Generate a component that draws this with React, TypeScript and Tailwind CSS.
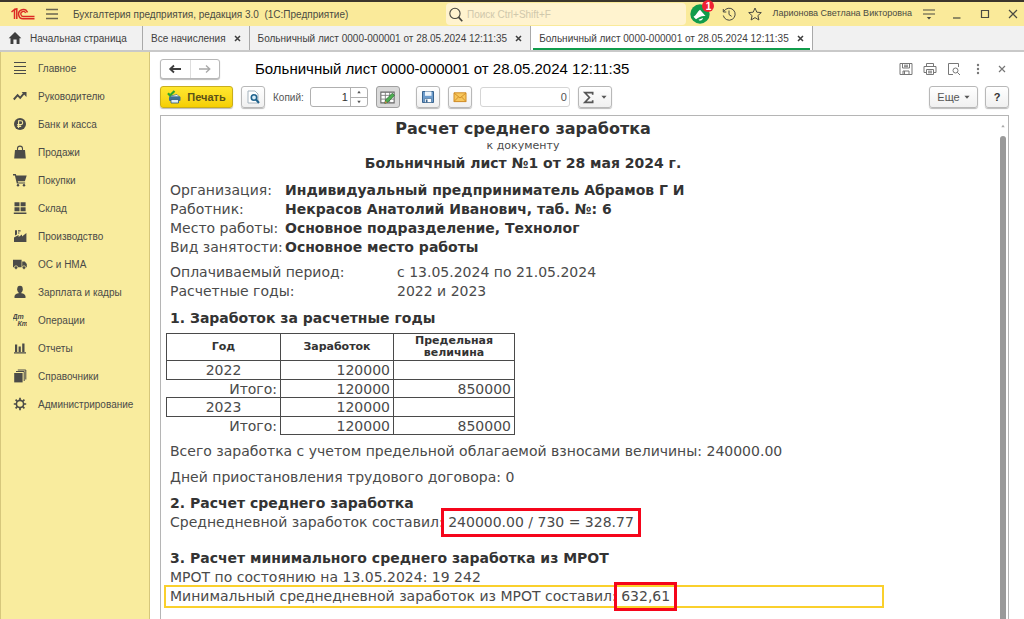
import type { ReactNode } from "react";
import clsx from "clsx";

type IconProps = { children: ReactNode; size?: number; className?: string };

function Icon({ children, size = 14, className }: IconProps) {
  return (
    <svg
      width={size}
      height={size}
      viewBox="0 0 14 14"
      fill="currentColor"
      className={clsx("shrink-0", className)}
      aria-hidden="true"
    >
      {children}
    </svg>
  );
}

const line = { fill: "none", stroke: "currentColor" };

const sections: { label: string; icon: ReactNode }[] = [
  { label: "Главное", icon: <path d="M1 1.5h12M1 5.5h12M1 9.500h12M1 12.5h12" {...line} strokeWidth={1} /> },
  {
    label: "Руководителю",
    icon: (
      <>
        <path d="M.8 10.5 4.6 6.2l2.6 2.6 4-4.6" {...line} strokeWidth={1.9} />
        <path d="M8.6 3h4.9v4.9z" />
      </>
    ),
  },
  {
    label: "Банк и касса",
    icon: (
      <>
        <circle cx="7" cy="7" r="6" />
        <path d="M5.6 11V3.8h2.2a1.9 1.9 0 0 1 0 3.8H4.2M4.2 9.4h4" fill="none" stroke="#f9ec9e" strokeWidth={1.1} />
      </>
    ),
  },
  {
    label: "Продажи",
    icon: (
      <>
        <path d="M2 5h10l.8 8.5H1.2z" />
        <path d="M4.5 7V3.6a2.5 2.5 0 0 1 5 0V7" {...line} strokeWidth={1.1} />
      </>
    ),
  },
  {
    label: "Покупки",
    icon: (
      <>
        <path d="M0 1h2.8l.5 1.6h10.4l-1.8 5.6H4.8l.3 1.2h7v1.2H3.8L1.9 2.4H0z" />
        <circle cx="5" cy="12.3" r="1.2" />
        <circle cx="11" cy="12.3" r="1.2" />
      </>
    ),
  },
  {
    label: "Склад",
    icon: <path d="M1.5 1.2h5v4h-5zM7.6 1.2h5v4h-5zM1.5 6.3h5v4h-5zM7.6 6.3h5v4h-5zM.8 11.6h12.6v1.4H.8z" />,
  },
  {
    label: "Производство",
    icon: <path d="M1 13V8.400l4.600-2.400V8l3.400-2.400v1.800l4.400-3.400V13zM2 1.200h2V5.400l-2 1.200zM5 1.200h2.600v1.400H5zM5 3.400h1.400v1.200H5z" />,
  },
  {
    label: "ОС и НМА",
    icon: (
      <>
        <path d="M0 2.8h8.6v7.4H0zM9.2 4.4h2.6L13.8 7v3.2H9.2z" />
        <circle cx="3" cy="10.6" r="1.8" stroke="#f9ec9e" strokeWidth={0.7} />
        <circle cx="11" cy="10.6" r="1.8" stroke="#f9ec9e" strokeWidth={0.7} />
      </>
    ),
  },
  {
    label: "Зарплата и кадры",
    icon: (
      <>
        <ellipse cx="7" cy="4.200" rx="2.800" ry="3.400" />
        <path d="M5.700 6.500h2.600v1.800c2.500.3 4 1.400 4.200 3V13h-11v-1.700c.2-1.600 1.700-2.700 4.200-3z" />
      </>
    ),
  },
  {
    label: "Операции",
    icon: (
      <>
        <text x="-.5" y="6" fontSize="7" fontWeight="700" fontStyle="italic">Дт</text>
        <text x="4.500" y="13" fontSize="7" fontWeight="700" fontStyle="italic">Кт</text>
      </>
    ),
  },
  { label: "Отчеты", icon: <path d="M2 3.500h2.200V11H2zM5.600 5.500h2.200V11H5.600zM9.200 2.500h2.300V11H9.200zM1 11.300h12v1.200H1z" /> },
  {
    label: "Справочники",
    icon: (
      <>
        <path d="M1.200 4h8.400v9.400H1.200z" />
        <path d="M3 2.500h8.200V12M4.800 1h8v9.500" {...line} strokeWidth={1} />
      </>
    ),
  },
  {
    label: "Администрирование",
    icon: (
      <>
        <circle cx="7" cy="7" r="3.600" {...line} strokeWidth={1.600} />
        <path
          d="M7 .8v2.400M7 10.800v2.400M.8 7h2.400M10.800 7h2.400M2.600 2.600l1.700 1.700M9.700 9.700l1.700 1.700M2.600 11.400l1.700-1.700M9.700 4.300l1.700-1.700"
          {...line}
          strokeWidth={1.700}
        />
      </>
    ),
  },
];

const years = [
  { year: "2022", income: "120000", limit: "850000" },
  { year: "2023", income: "120000", limit: "850000" },
];

const details = [
  ["Организация:", "Индивидуальный предприниматель Абрамов Г И"],
  ["Работник:", "Некрасов Анатолий Иванович, таб. №: 6"],
  ["Место работы:", "Основное подразделение, Технолог"],
  ["Вид занятости:", "Основное место работы"],
];

const periods = [
  ["Оплачиваемый период:", "с 13.05.2024 по 21.05.2024"],
  ["Расчетные годы:", "2022 и 2023"],
];

const docTitle = "Больничный лист 0000-000001 от 28.05.2024 12:11:35";

function TitleBar() {
  return (
    <header className="flex h-[26px] items-center border-t-2 border-[#3b352c] bg-[#faea9a] pl-[11px] text-[#4a4a42]">
      <svg width="24" height="12" viewBox="0 0 24 12" className="shrink-0" fill="none" stroke="#dc2a24" aria-label="1С">
        <path d="M.5 4 3.500 1.500V11M2.500 2.200 5.800 .8V11" strokeWidth="1.500" />
        <path d="M16.500 4.400A4.600 4.600 0 1 0 12.400 10.700H23.500" strokeWidth="1.500" />
        <path d="M14.600 5A2.500 2.500 0 1 0 12.500 8.500H23.500" strokeWidth="1.300" />
      </svg>
      <button type="button" aria-label="Меню" className="ml-2.5 text-[#6b6650]">
        <Icon><path d="M1 2.500h12M1 7h12M1 11.500h12" {...line} strokeWidth={1.300} /></Icon>
      </button>
      <h1 className="ml-3.5 w-[373px] shrink-0 truncate text-[10px] whitespace-pre">
        Бухгалтерия предприятия, редакция 3.0  (1С:Предприятие)
      </h1>
      <label className="flex h-[22px] min-w-0 flex-1 items-center gap-1 rounded-sm bg-[#fff3cf] px-0.5">
        <Icon size={15} className="text-[#45443c]">
          <circle cx="6.500" cy="6" r="4.800" {...line} />
          <path d="m9.800 9.500 3.500 3.800" {...line} strokeWidth={1.600} />
        </Icon>
        <input
          aria-label="Поиск"
          placeholder="Поиск Ctrl+Shift+F"
          className="min-w-0 flex-1 bg-transparent text-[10px] outline-none placeholder:text-[#d0c8ac]"
        />
      </label>
      <button type="button" aria-label="Уведомления" className="relative ml-1 shrink-0">
        <svg width="20" height="20" viewBox="0 0 20 20">
          <circle cx="10" cy="10" r="9.700" fill="#109c4b" />
          <path d="M3.500 12.800c3-1.800 4-5.300 6.500-7l5.500 6.200c-4-.6-6.500 1.200-9.500 3.200zM8.500 15.800l4.500-1.800c0 2.200-3.400 3.600-4.500 1.800z" fill="#fff" />
        </svg>
        <span className="absolute -top-1 -right-1 flex size-3 items-center justify-center rounded-full bg-[#ee2233] text-[10px] font-bold text-white">
          1
        </span>
      </button>
      <button type="button" aria-label="История" className="ml-3 shrink-0">
        <Icon>
          <path d="M1.800 4.500A6 6 0 1 1 1.300 8.500M1.300 2v3h3M7 3.500v4l2.600 1.800" {...line} />
        </Icon>
      </button>
      <button type="button" aria-label="Избранное" className="ml-3 shrink-0">
        <Icon>
          <path d="m7 1 1.800 4.200 4.500.4-3.400 3 1 4.400L7 10.600 3.100 13l1-4.400-3.400-3 4.500-.4z" {...line} />
        </Icon>
      </button>
      <span className="ml-2.5 shrink-0 text-[9px]">Ларионова Светлана Викторовна</span>
      <button type="button" aria-label="Настройки" className="ml-2.5 shrink-0">
        <Icon>
          <path d="M1 3h12M1 7h12" {...line} strokeWidth={1.200} />
          <path d="M4.800 10h4.400L7 12.600z" />
        </Icon>
      </button>
      <button type="button" aria-label="Свернуть" className="ml-3.5 shrink-0">
        <Icon><path d="M3 11h7.500" {...line} strokeWidth={1.200} /></Icon>
      </button>
      <button type="button" aria-label="Развернуть" className="ml-3.5 shrink-0">
        <Icon><path d="M3.500 3.500h7v7h-7z" {...line} strokeWidth={1.200} /></Icon>
      </button>
      <button type="button" aria-label="Закрыть" className="mr-1 ml-3.5 shrink-0">
        <Icon><path d="m3 3 8 8M11 3l-8 8" {...line} strokeWidth={1.200} /></Icon>
      </button>
    </header>
  );
}

function Tab({ label, active }: { label: string; active?: boolean }) {
  return (
    <div className={clsx("flex shrink-0 border-r border-[#a9a9a9] px-0.5", active && "bg-white")}>
      <div className={clsx("flex items-center gap-2 border-t-2 border-b-2 border-t-transparent px-1.5", active ? "border-b-[#109c4b]" : "border-b-transparent")}>
        <a href="#tab">{label}</a>
        <button type="button" aria-label="Закрыть вкладку">
          <Icon size={7}><path d="m2 2 10 10M12 2 2 12" {...line} strokeWidth={3} /></Icon>
        </button>
      </div>
    </div>
  );
}

function Tabs() {
  return (
    <nav className="flex h-[26px] border-b-2 border-[#c9c9c9] bg-[#f1f1f1] text-[10px] whitespace-nowrap text-[#3e3e3e]">
      <a href="#home" className="flex w-[143px] shrink-0 items-center gap-2 border-r border-[#a9a9a9] pl-2">
        <Icon><path d="M7 1 13.300 7.200h-1.800V13H8.600V8.500H5.400V13H2.500V7.200H.7z" /></Icon>
        Начальная страница
      </a>
      <Tab label="Все начисления" />
      <Tab label={docTitle} />
      <Tab label={docTitle} active />
    </nav>
  );
}

function Sidebar() {
  return (
    <aside className="w-[150px] shrink-0 border-x border-[#d6c77c] bg-[#f9ec9e] pt-0.5">
      {sections.map((s) => (
        <a key={s.label} href="#section" className="flex h-7 items-center gap-[11px] pl-3 text-[10px] whitespace-nowrap text-[#4b4b48]">
          <Icon>{s.icon}</Icon>
          {s.label}
        </a>
      ))}
    </aside>
  );
}

const btn =
  "flex h-[22px] shrink-0 items-center justify-center rounded-[3px] border border-[#b8b8b8] bg-linear-to-b from-white to-[#f0f0f0] shadow-[0_1px_1px_#bbbbbb]";

function Caret() {
  return <Icon size={6}><path d="M1 4h12L7 11z" /></Icon>;
}

function DocHeader() {
  return (
    <div className="flex h-5 items-center text-[#777777]">
      <div className="flex h-5 w-[60px] rounded-[3px] border border-[#b8b8b8] bg-white shadow-[0_1px_1px_#bbbbbb]">
        <button type="button" aria-label="Назад" className="flex flex-1 items-center justify-center border-r border-[#dddddd] text-[#3c3c3c]">
          <Icon><path d="M13 7H3M6 3.500 2.200 7 6 10.500" {...line} strokeWidth={1.800} /></Icon>
        </button>
        <button type="button" aria-label="Вперед" className="flex flex-1 items-center justify-center text-[#a8a8a8]">
          <Icon><path d="M1 7h10M8 3.500 11.800 7 8 10.500" {...line} strokeWidth={1.300} /></Icon>
        </button>
      </div>
      <h2 className="ml-[35px] text-[15px] whitespace-nowrap text-black">{docTitle}</h2>
      <div className="ml-auto flex items-center gap-2.5">
        <button type="button" aria-label="Сохранить">
          <Icon><path d="M1 1.500h12v11H1zM3.500 1.500V6h7V1.500M5 3.200h4M5 4.700h4M4 12.500V9h6v3.500M5.500 9v3.500" {...line} /></Icon>
        </button>
        <button type="button" aria-label="Печать">
          <Icon><path d="M3.500 4.500v-3h7v3M3.500 10.500H1v-6h12v6h-2.500M3.500 7.500h7v5h-7zM5 9.200h4M5 10.800h4" {...line} /></Icon>
        </button>
        <button type="button" aria-label="Просмотр">
          <Icon>
            <path d="M6 12.500H1.500v-11h10V5" {...line} />
            <circle cx="8.500" cy="8.500" r="2.500" {...line} />
            <path d="m10.300 10.300 2.700 2.700" {...line} />
          </Icon>
        </button>
        <button type="button" aria-label="Меню документа">
          <Icon><circle cx="7" cy="3" r="1.200" /><circle cx="7" cy="7" r="1.200" /><circle cx="7" cy="11" r="1.200" /></Icon>
        </button>
        <button type="button" aria-label="Закрыть документ">
          <Icon><path d="m4 4 6 6M10 4l-6 6" {...line} strokeWidth={1.200} /></Icon>
        </button>
      </div>
    </div>
  );
}

function Toolbar() {
  return (
    <div className="mt-[7px] flex h-[22px] items-center text-[10px] text-[#555555]">
      <button
        type="button"
        className="flex h-[22px] w-[73px] shrink-0 items-center justify-center gap-1.5 rounded-[3px] border border-[#c9ae1c] bg-linear-to-b from-[#ffe72e] to-[#f5cf00] text-[11px] font-bold text-[#5a5118] shadow-[0_1px_1px_#bbbbbb]"
      >
        <Icon>
          <path d="M3.500 6 10 4.500l2.500 2.500H3z" fill="#fff" stroke="#44708c" strokeWidth={0.800} />
          <rect x="2" y="6.500" width="11.500" height="4.500" rx="1" fill="#3d6f92" />
          <path d="M4 9.500h7.500v3.500H4z" fill="#dcecf7" stroke="#2f5873" strokeWidth={0.800} />
          <path d="m1 3.200 2 2.300L7.500 1" fill="none" stroke="#2ba52f" strokeWidth={2.200} />
        </Icon>
        Печать
      </button>
      <button type="button" aria-label="Предварительный просмотр" className={clsx(btn, "ml-2 w-6")}>
        <Icon>
          <path d="M2 1h7l3 3v9H2z" fill="#fff" stroke="#a5b3bd" />
          <circle cx="8" cy="7.500" r="2.700" fill="#d9edf8" stroke="#1f628c" strokeWidth={1.600} />
          <path d="m10 9.500 3 3.500" stroke="#1f628c" strokeWidth={2} />
        </Icon>
      </button>
      <label htmlFor="copies" className="ml-2 shrink-0">Копий:</label>
      <div className="ml-1.5 flex h-5 w-[58px] shrink-0 rounded-[3px] border border-[#b0b0b0] bg-white">
        <input id="copies" defaultValue="1" inputMode="numeric" className="w-[39px] px-0.5 text-right text-[11px] text-[#333333] outline-none" />
        <div className="flex flex-1 flex-col border-l border-[#b0b0b0]">
          <button type="button" aria-label="Больше" className="flex flex-1 items-center justify-center border-b border-[#b0b0b0]">
            <Icon size={4}><path d="M1 11h12L7 3z" /></Icon>
          </button>
          <button type="button" aria-label="Меньше" className="flex flex-1 items-center justify-center">
            <Icon size={4}><path d="M1 3h12L7 11z" /></Icon>
          </button>
        </div>
      </div>
      <button
        type="button"
        aria-label="Редактирование"
        className="ml-2 flex h-[22px] w-6 shrink-0 items-center justify-center rounded-[3px] border border-[#a0a0a0] bg-[#dadada]"
      >
        <Icon size={15}>
          <path d="M.8 2h12.400v10H.8z" fill="#fff" stroke="#666" />
          <path d="M1 5h12M1 8.500h12M5 2v10M9 2v10" stroke="#777" strokeWidth={0.800} />
          <path d="m4.500 12.500.8-3.300L11.500 3l2 2-6 6.200z" fill="#4caf50" stroke="#2d6b35" strokeWidth={0.700} />
          <path d="m4.500 12.500.6-2.500 1.600 1.600z" fill="#c98242" />
        </Icon>
      </button>
      <button type="button" aria-label="Сохранить файл" className={clsx(btn, "ml-4 w-6")}>
        <Icon>
          <path d="M1.500 1.500h11v11h-11z" fill="#6d9ccc" stroke="#39648f" />
          <path d="M4 1.500h6.500v4.300H4z" fill="#eef5fb" />
          <path d="M3.800 8.500h6.700v4H3.800z" fill="#fff" stroke="#39648f" strokeWidth={0.600} />
          <path d="M5 9.500h1.500v3H5z" fill="#39648f" />
        </Icon>
      </button>
      <button type="button" aria-label="Отправить по почте" className={clsx(btn, "ml-2 w-6")}>
        <Icon>
          <path d="M1 2.800h12v8.800H1z" fill="#f7c65b" stroke="#cf8b25" />
          <path d="m1 3 6 5 6-5M1 11.500l4.500-4.600M13 11.500 8.500 6.900" fill="none" stroke="#cf8b25" strokeWidth={0.900} />
        </Icon>
      </button>
      <input aria-label="Сумма" defaultValue="0" className="ml-2 h-5 w-[90px] rounded-[3px] border border-[#d5d5d5] bg-white px-0.5 text-right text-[11px] outline-none" />
      <button type="button" aria-label="Сумма ячеек" className={clsx(btn, "ml-2 w-[34px] gap-1.5")}>
        <Icon size={13}><path d="M11.500 4V1.700H3L8 7l-5 5.300h8.500V10" {...line} strokeWidth={1.800} /></Icon>
        <Caret />
      </button>
      <button type="button" className={clsx(btn, "ml-auto w-[49px] gap-1 text-[11px]")}>
        Еще <Caret />
      </button>
      <button type="button" aria-label="Справка" className={clsx(btn, "ml-[7px] w-6 text-[11px] font-bold text-[#333333]")}>?</button>
    </div>
  );
}

function IncomeTable() {
  const cell = "border border-[#4a4a4a] px-[3px]";
  return (
    <table className="-ml-1 mt-[5px] w-[349px] table-fixed border-collapse leading-[16px]">
      <colgroup>
        <col className="w-[114px]" />
        <col className="w-[113px]" />
        <col className="w-[121px]" />
      </colgroup>
      <thead>
        <tr className="h-[27px] text-[11px] leading-[12px] whitespace-normal text-[#333333]">
          <th className={cell}>Год</th>
          <th className={cell}>Заработок</th>
          <th className={cell}>Предельная величина</th>
        </tr>
      </thead>
      {years.map((y) => (
        <tbody key={y.year} className="text-right">
          <tr className="h-[19px]">
            <td className={clsx(cell, "text-center")}>{y.year}</td>
            <td className={cell}>{y.income}</td>
            <td className={cell} />
          </tr>
          <tr className="h-[18px]">
            <td className="px-[3px]">Итого:</td>
            <td className={cell}>{y.income}</td>
            <td className={cell}>{y.limit}</td>
          </tr>
        </tbody>
      ))}
    </table>
  );
}

function Report() {
  return (
    <article className="min-w-0 flex-1 pt-[3px] pl-[9px] font-['DejaVu_Sans',sans-serif] text-[14px] leading-[19px] whitespace-nowrap text-[#4a4a4a]">
      <div className="w-[706px] text-center">
        <h3 className="text-[16px] font-bold text-[#333333]">Расчет среднего заработка</h3>
        <p className="text-[11px] leading-[16px]">к документу</p>
        <p className="font-bold text-[#333333]">Больничный лист №1 от 28 мая 2024 г.</p>
      </div>
      <dl className="mt-2 grid grid-cols-[115px_1fr]">
        {details.map(([k, v]) => (
          <div key={k} className="contents">
            <dt>{k}</dt>
            <dd className="font-bold text-[#333333]">{v}</dd>
          </div>
        ))}
      </dl>
      <dl className="mt-1.5 grid grid-cols-[227px_1fr]">
        {periods.map(([k, v]) => (
          <div key={k} className="contents">
            <dt>{k}</dt>
            <dd>{v}</dd>
          </div>
        ))}
      </dl>
      <h4 className="mt-2 font-bold text-[#333333]">1. Заработок за расчетные годы</h4>
      <IncomeTable />
      <p className="mt-[7px]">Всего заработка с учетом предельной облагаемой взносами величины: 240000.00</p>
      <p className="mt-[7px]">Дней приостановления трудового договора: 0</p>
      <h4 className="mt-[7px] font-bold text-[#333333]">2. Расчет среднего заработка</h4>
      <p>
        Среднедневной заработок составил:{" "}
        <span className="-mx-0.5 inline-block px-0.5 outline-3 outline-offset-2 outline-[#f5051b]">240000.00 / 730 = 328.77</span>
      </p>
      <h4 className="mt-[17px] font-bold text-[#333333]">3. Расчет минимального среднего заработка из МРОТ</h4>
      <p>МРОТ по состоянию на 13.05.2024: 19 242</p>
      <p className="-mt-0.5 -ml-1.5 max-w-[720px] border-2 border-[#fad02c] pl-1">
        Минимальный среднедневной заработок из МРОТ составил:{" "}
        <span className="-mx-0.5 inline-block px-0.5 outline-3 outline-offset-2 outline-[#f5051b]">632,61</span>
      </p>
    </article>
  );
}

export default function App() {
  return (
    <div className="flex min-h-screen flex-col bg-white font-['Liberation_Sans',Arial,sans-serif]">
      <TitleBar />
      <Tabs />
      <div className="flex flex-1">
        <Sidebar />
        <main className="flex min-w-0 flex-1 flex-col pt-[7px] pr-[15px] pl-2.5">
          <DocHeader />
          <Toolbar />
          <div className="mt-[7px] flex flex-1 border border-b-0 border-[#b5b5b5]">
            <Report />
            <div className="flex w-2.5 flex-col items-center pt-2 text-[#aaaaaa]">
              <Icon size={4}><path d="M1 11h12L7 3z" /></Icon>
              <div className="mt-2 w-1.5 flex-1 rounded-t bg-[#9a9a9a]" />
            </div>
          </div>
        </main>
      </div>
    </div>
  );
}
